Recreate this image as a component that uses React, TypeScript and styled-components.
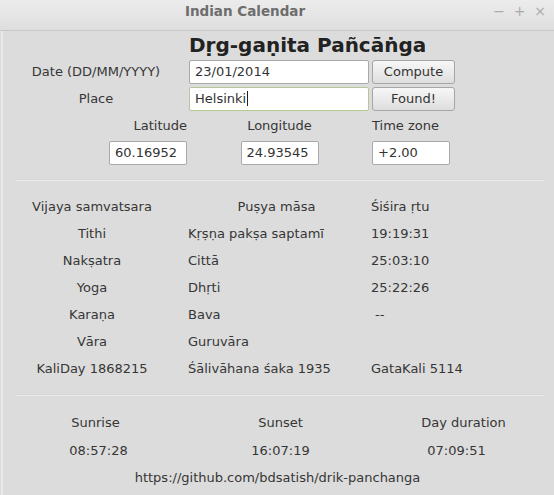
import React from "react";
import styled, { createGlobalStyle } from "styled-components";

const Global = createGlobalStyle`
  html, body { margin: 0; padding: 0; background: #dcdcdc; }
  body { font-family: "DejaVu Sans", "Noto Sans", sans-serif; }
`;

const Window = styled.div`
  width: 554px;
  height: 495px;
  background: #dcdcdc;
  color: #363636;
  font-size: 13px;
  display: flex;
  flex-direction: column;
  overflow: hidden;
  box-sizing: border-box;
`;

const TitleBar = styled.div`
  height: 31px;
  box-sizing: border-box;
  background: linear-gradient(#ececec, #dedede);
  border-bottom: 1px solid #c8c8c8;
  display: flex;
  align-items: flex-start;
`;

const Title = styled.div`
  flex: 1;
  text-align: center;
  font-weight: bold;
  font-size: 13.5px;
  color: #6d6d6d;
  padding-top: 3px;
  line-height: 16px;
`;

const WinButtons = styled.div`
  width: 64px;
  display: flex;
  justify-content: space-between;
  padding: 3px 5px 0 0;
  box-sizing: border-box;
  color: #ababab;
  font-size: 14px;
  line-height: 16px;
`;

const WinBtn = styled.span`
  width: 18px;
  text-align: center;
`;

const Body = styled.div`
  flex: 1;
  border-left: 2px solid #e9e9e9;
  margin-left: 1px;
  display: flex;
  flex-direction: column;
  padding-top: 2px;
`;

const Heading = styled.div`
  font-weight: bold;
  font-size: 20px;
  line-height: 24px;
  color: #222;
  padding-left: 186px;
`;

const FormGrid = styled.div`
  margin: 3px 0 0 3px;
  display: grid;
  grid-template-columns: 180px 180px 83px;
  column-gap: 3px;
  row-gap: 3px;
`;

const CenterLabel = styled.div`
  height: 24px;
  line-height: 24px;
  text-align: center;
`;

const TextField = styled.div<{ $focus?: boolean; $w?: number }>`
  height: 24px;
  box-sizing: border-box;
  width: ${(p) => (p.$w ? `${p.$w}px` : "auto")};
  background: #fff;
  border: 1px solid ${(p) => (p.$focus ? "#b7c79a" : "#a9a9a9")};
  border-radius: 2px;
  padding: 0 5px;
  line-height: 22px;
  color: #333;
  white-space: nowrap;
`;

const Caret = styled.span`
  display: inline-block;
  width: 1px;
  height: 15px;
  background: #222;
  vertical-align: -3px;
  margin-left: 1px;
`;

const Button = styled.div`
  height: 24px;
  box-sizing: border-box;
  border: 1px solid #a6a6a6;
  border-radius: 3px;
  background: linear-gradient(#f7f7f7, #dedede);
  text-align: center;
  line-height: 22px;
  color: #333;
`;

const CoordGrid = styled.div`
  margin: 3px 0 0 13px;
  display: grid;
  grid-template-columns: 171px 185px 1fr;
  row-gap: 3px;
`;

const CoordCell = styled.div<{ $align: "start" | "center" | "end" }>`
  display: flex;
  justify-content: ${(p) =>
    p.$align === "start" ? "flex-start" : p.$align === "end" ? "flex-end" : "center"};
  height: 24px;
  line-height: 24px;
`;

const Separator = styled.div<{ $top: number }>`
  margin: ${(p) => p.$top}px 10px 0 13px;
  height: 2px;
  background: linear-gradient(#d6d6d6 0 1px, #ebebeb 1px 2px);
`;

const InfoGrid = styled.div`
  margin: 12px 0 0 13px;
  display: grid;
  grid-template-columns: 152px 20px 177px 6px 1fr;
  grid-auto-rows: 27px;
  line-height: 27px;
`;

const InfoCell = styled.div<{ $col: number; $center?: boolean; $pad?: number }>`
  grid-column: ${(p) => p.$col};
  text-align: ${(p) => (p.$center ? "center" : "left")};
  padding-left: ${(p) => p.$pad ?? 0}px;
  white-space: nowrap;
`;

const SunGrid = styled.div`
  margin-top: 13px;
  display: grid;
  grid-template-columns: 185px 185px 1fr;
  grid-auto-rows: 28px;
  line-height: 28px;
  text-align: center;
`;

const SunCell = styled.div<{ $shift?: number }>`
  position: relative;
  left: ${(p) => p.$shift ?? 0}px;
`;

const Link = styled.div`
  text-align: center;
  line-height: 26px;
  padding-right: 2px;
`;

const rows: [string, string, string, boolean?][] = [
  ["Tithi", "Kṛṣṇa pakṣa saptamī", "19:19:31"],
  ["Nakṣatra", "Cittā", "25:03:10"],
  ["Yoga", "Dhṛti", "25:22:26"],
  ["Karaṇa", "Bava", "--", true],
  ["Vāra", "Guruvāra", ""],
  ["KaliDay 1868215", "Śālivāhana śaka 1935", "GataKali 5114"],
];

export default function App() {
  return (
    <>
      <Global />
      <Window>
        <TitleBar>
          <Title>Indian Calendar</Title>
          <WinButtons>
            <WinBtn>−</WinBtn>
            <WinBtn>+</WinBtn>
            <WinBtn>×</WinBtn>
          </WinButtons>
        </TitleBar>
        <Body>
          <Heading>Dṛg-gaṇita Pañcāṅga</Heading>
          <FormGrid>
            <CenterLabel>Date (DD/MM/YYYY)</CenterLabel>
            <TextField>23/01/2014</TextField>
            <Button>Compute</Button>
            <CenterLabel>Place</CenterLabel>
            <TextField $focus>
              Helsinki
              <Caret />
            </TextField>
            <Button>Found!</Button>
          </FormGrid>
          <CoordGrid>
            <CoordCell $align="end">Latitude</CoordCell>
            <CoordCell $align="center">Longitude</CoordCell>
            <CoordCell $align="start">Time zone</CoordCell>
            <CoordCell $align="end">
              <TextField $w={78}>60.16952</TextField>
            </CoordCell>
            <CoordCell $align="center">
              <TextField $w={78}>24.93545</TextField>
            </CoordCell>
            <CoordCell $align="start">
              <TextField $w={78}>+2.00</TextField>
            </CoordCell>
          </CoordGrid>
          <Separator $top={14} />
          <InfoGrid>
            <InfoCell $col={1} $center>
              Vijaya samvatsara
            </InfoCell>
            <InfoCell $col={3} $center>
              Puṣya māsa
            </InfoCell>
            <InfoCell $col={5}>Śiśira ṛtu</InfoCell>
            {rows.map(([a, b, c, dash]) => (
              <React.Fragment key={a}>
                <InfoCell $col={1} $center>
                  {a}
                </InfoCell>
                <InfoCell $col={3}>{b}</InfoCell>
                <InfoCell $col={5} $pad={dash ? 4 : 0}>
                  {c}
                </InfoCell>
              </React.Fragment>
            ))}
          </InfoGrid>
          <Separator $top={12} />
          <SunGrid>
            <SunCell>Sunrise</SunCell>
            <SunCell>Sunset</SunCell>
            <SunCell>Day duration</SunCell>
            <SunCell $shift={3}>08:57:28</SunCell>
            <SunCell>16:07:19</SunCell>
            <SunCell $shift={-7}>07:09:51</SunCell>
          </SunGrid>
          <Link>https://github.com/bdsatish/drik-panchanga</Link>
        </Body>
      </Window>
    </>
  );
}
